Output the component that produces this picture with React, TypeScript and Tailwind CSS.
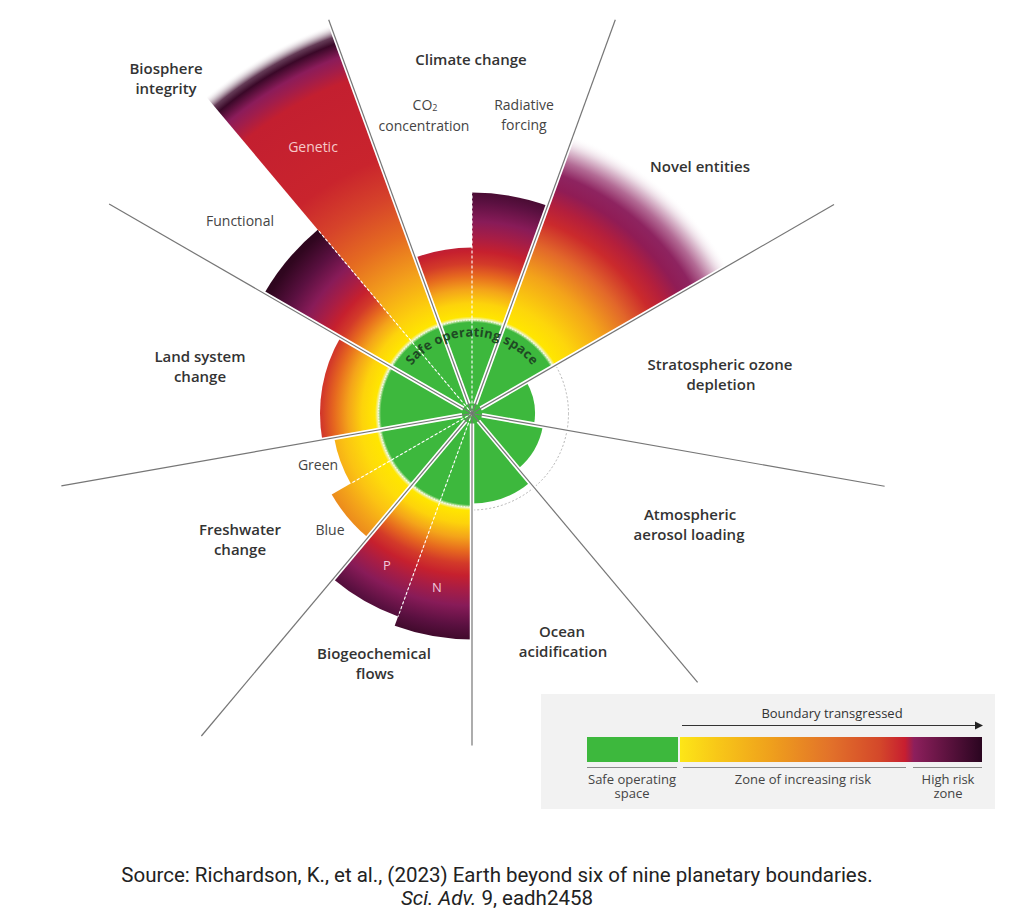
import React from "react";

const CX = 472;
const CY = 413.5;

type Stop = [number, string, number?];

function pt(a: number, r: number): [number, number] {
  const t = (a * Math.PI) / 180;
  return [CX + r * Math.sin(t), CY - r * Math.cos(t)];
}

function wedge(a1: number, a2: number, r: number) {
  const [x1, y1] = pt(a1, r);
  const [x2, y2] = pt(a2, r);
  return `M${CX},${CY} L${x1.toFixed(2)},${y1.toFixed(2)} A${r},${r} 0 0 1 ${x2.toFixed(2)},${y2.toFixed(2)} Z`;
}

const GREEN = "#3db83d";

const head: Stop[] = [
  [0, GREEN],
  [91, GREEN],
  [94, "#eef3c4"],
  [97, "#ffe600"],
];

// radius -> colour, per kind of wedge
const gradients: Record<string, { R: number; stops: Stop[] }> = {
  std: {
    R: 250,
    stops: [
      ...head,
      [110, "#fdd30b"],
      [124, "#f4a41a"],
      [138, "#e6681f"],
      [150, "#d33a29"],
      [162, "#c6202e"],
      [176, "#a81d45"],
      [192, "#881b58"],
      [212, "#5a1040"],
      [235, "#30061f"],
      [250, "#2a051c"],
    ],
  },
  fresh: {
    R: 170,
    stops: [
      ...head,
      [112, "#fedc0a"],
      [130, "#fbc313"],
      [148, "#f3a21a"],
      [165, "#ea861d"],
    ],
  },
  novel: {
    R: 300,
    stops: [
      ...head,
      [115, "#fdd60b"],
      [150, "#f3a31a"],
      [180, "#e2672a"],
      [205, "#cb2a2c"],
      [222, "#b41f3c"],
      [240, "#901c55"],
      [254, "#8e2460"],
      [268, "#b36b95"],
      [282, "#e5cfdc"],
      [296, "#ffffff", 0],
    ],
  },
  genetic: {
    R: 420,
    stops: [
      ...head,
      [115, "#fdd00c"],
      [150, "#f3a01b"],
      [190, "#e56b21"],
      [230, "#d6432a"],
      [270, "#c9242d"],
      [355, "#c31f30"],
      [370, "#a01d4c"],
      [380, "#8b1c5a"],
      [394, "#3a0828"],
      [401, "#4a1a3a", 0.85],
      [414, "#ffffff", 0],
    ],
  },
};

const wedges: { a1: number; a2: number; r: number; fill: string }[] = [
  { a1: -20, a2: 0, r: 166, fill: "url(#g-std)" },
  { a1: 0, a2: 20, r: 221, fill: "url(#g-std)" },
  { a1: 20, a2: 60, r: 300, fill: "url(#g-novel)" },
  { a1: 60, a2: 100, r: 63, fill: GREEN },
  { a1: 100, a2: 140, r: 72, fill: GREEN },
  { a1: 140, a2: 180, r: 90, fill: GREEN },
  { a1: 180, a2: 200, r: 226, fill: "url(#g-std)" },
  { a1: 200, a2: 220, r: 216, fill: "url(#g-std)" },
  { a1: 220, a2: 240, r: 162, fill: "url(#g-fresh)" },
  { a1: 240, a2: 260, r: 140, fill: "url(#g-fresh)" },
  { a1: 260, a2: 300, r: 152, fill: "url(#g-std)" },
  { a1: 300, a2: 320, r: 240, fill: "url(#g-std)" },
  { a1: 320, a2: 340, r: 420, fill: "url(#g-genetic)" },
];

const dividers: [number, number][] = [
  [-20, 419],
  [20, 419],
  [60, 418],
  [100, 419],
  [140, 351],
  [180, 332],
  [220, 421],
  [260, 417],
  [300, 419],
];

const subDividers: [number, number][] = [
  [0, 221],
  [320, 240],
  [200, 216],
  [240, 140],
];

const boldLabels: [string, number, number][] = [
  ["Biosphere", 166, 74],
  ["integrity", 166, 94],
  ["Climate change", 471, 65],
  ["Novel entities", 700, 172],
  ["Land system", 200, 362],
  ["change", 200, 382],
  ["Stratospheric ozone", 720, 370],
  ["depletion", 721, 390],
  ["Atmospheric", 690, 520],
  ["aerosol loading", 689, 540],
  ["Ocean", 562, 637],
  ["acidification", 563, 657],
  ["Freshwater", 240, 535],
  ["change", 240, 555],
  ["Biogeochemical", 374, 659],
  ["flows", 375, 679],
];

const plainLabels: [string, number, number][] = [
  ["concentration", 424, 131],
  ["Radiative", 524, 110],
  ["forcing", 524, 130],
  ["Functional", 240, 226],
  ["Green", 318, 470],
  ["Blue", 330, 535],
];

function Gradient({ id }: { id: string }) {
  const g = gradients[id];
  return (
    <radialGradient id={`g-${id}`} gradientUnits="userSpaceOnUse" cx={CX} cy={CY} r={g.R}>
      {g.stops.map(([r, c, o], i) => (
        <stop key={i} offset={r / g.R} stopColor={c} stopOpacity={o ?? 1} />
      ))}
    </radialGradient>
  );
}

function Legend() {
  return (
    <g>
      <rect x={541} y={694} width={454} height={115} fill="#f2f2f2" />
      <text x={832} y={718} textAnchor="middle" fontSize={13} fill="#333">
        Boundary transgressed
      </text>
      <line x1={682} y1={725.5} x2={976} y2={725.5} stroke="#333" strokeWidth={1} />
      <polygon points="975,721.5 983,725.5 975,729.5" fill="#222" />
      <rect x={587} y={737} width={91} height={25} fill={GREEN} />
      <rect x={680} y={737} width={302} height={25} fill="url(#legend-bar)" />
      <g stroke="#8a8a8a" strokeWidth={1}>
        <line x1={587} y1={767.5} x2={677} y2={767.5} />
        <line x1={683} y1={767.5} x2={906} y2={767.5} />
        <line x1={913} y1={767.5} x2={982} y2={767.5} />
      </g>
      <g fontSize={13} fill="#444" textAnchor="middle">
        <text y={784}>
          <tspan x={632}>Safe operating</tspan>
          <tspan x={632} dy={14}>space</tspan>
        </text>
        <text x={803} y={784}>Zone of increasing risk</text>
        <text y={784}>
          <tspan x={948}>High risk</tspan>
          <tspan x={948} dy={14}>zone</tspan>
        </text>
      </g>
    </g>
  );
}

function BoundariesChart() {
  const [ax, ay] = pt(-68, 77);
  const [bx, by] = pt(68, 77);
  return (
    <svg
      width={1024}
      height={850}
      viewBox="0 0 1024 850"
      className="block font-['Open_Sans',sans-serif]"
    >
      <defs>
        {Object.keys(gradients).map((k) => (
          <Gradient key={k} id={k} />
        ))}
        <linearGradient id="legend-bar" x1="0" x2="1" y1="0" y2="0">
          <stop offset="0" stopColor="#fde617" />
          <stop offset="0.12" stopColor="#f8c818" />
          <stop offset="0.3" stopColor="#efa01c" />
          <stop offset="0.5" stopColor="#e2712a" />
          <stop offset="0.66" stopColor="#d4482a" />
          <stop offset="0.745" stopColor="#c71e30" />
          <stop offset="0.775" stopColor="#8d1f5c" />
          <stop offset="1" stopColor="#2a0520" />
        </linearGradient>
        <path id="safe-arc" d={`M${ax},${ay} A77,77 0 0 1 ${bx},${by}`} />
      </defs>

      {/* boundary circle of the safe zone */}
      <circle cx={CX} cy={CY} r={96.5} fill="none" stroke="#b5b5b5" strokeWidth={1} strokeDasharray="2 2" />

      {wedges.map((w, i) => (
        <path key={i} d={wedge(w.a1, w.a2, w.r)} fill={w.fill} />
      ))}

      <circle cx={CX} cy={CY} r={93.5} fill="none" stroke="#ffffff" strokeOpacity={0.75} strokeWidth={1.4} strokeDasharray="1 1.8" />

      {subDividers.map(([a, r], i) => {
        const [x, y] = pt(a, r);
        return (
          <line key={i} x1={CX} y1={CY} x2={x} y2={y} stroke="#ffffff" strokeWidth={1.1} strokeDasharray="3 2" />
        );
      })}

      {dividers.map(([a, r], i) => {
        const [x, y] = pt(a, r);
        const [sx, sy] = pt(a, 10);
        return (
          <g key={i}>
            <line x1={sx} y1={sy} x2={x} y2={y} stroke="#ffffff" strokeWidth={4.5} />
            <line x1={CX} y1={CY} x2={x} y2={y} stroke="#767676" strokeWidth={1.2} />
          </g>
        );
      })}

      <text fontSize={13} fontWeight={700} fill="#1f4a24" letterSpacing={0.2}>
        <textPath href="#safe-arc" startOffset="50%" textAnchor="middle">
          Safe operating space
        </textPath>
      </text>

      <g fontSize={15} fontWeight={600} fill="#333" textAnchor="middle">
        {boldLabels.map(([t, x, y], i) => (
          <text key={i} x={x} y={y}>
            {t}
          </text>
        ))}
      </g>

      <g fontSize={14} fill="#444" textAnchor="middle">
        {plainLabels.map(([t, x, y], i) => (
          <text key={i} x={x} y={y}>
            {t}
          </text>
        ))}
        <text x={425} y={110}>
          CO<tspan fontSize={9} dy={1}>2</tspan>
        </text>
      </g>

      <text x={313} y={152} textAnchor="middle" fontSize={14} fill="#f6c9c9">
        Genetic
      </text>
      <text x={387} y={570} textAnchor="middle" fontSize={13} fill="#f0c7dc">
        P
      </text>
      <text x={437} y={592} textAnchor="middle" fontSize={13} fill="#f0c7dc">
        N
      </text>

      <Legend />
    </svg>
  );
}

export default function App() {
  return (
    <div className="w-[1024px] min-h-[924px] bg-white">
      <BoundariesChart />
      <div className="pt-[14px] pr-[30px] text-center text-[20.5px] leading-[23px] text-[#222] font-['Roboto',sans-serif]">
        <p>Source: Richardson, K., et al., (2023) Earth beyond six of nine planetary boundaries.</p>
        <p>
          <em>Sci. Adv.</em> 9, eadh2458
        </p>
      </div>
    </div>
  );
}
